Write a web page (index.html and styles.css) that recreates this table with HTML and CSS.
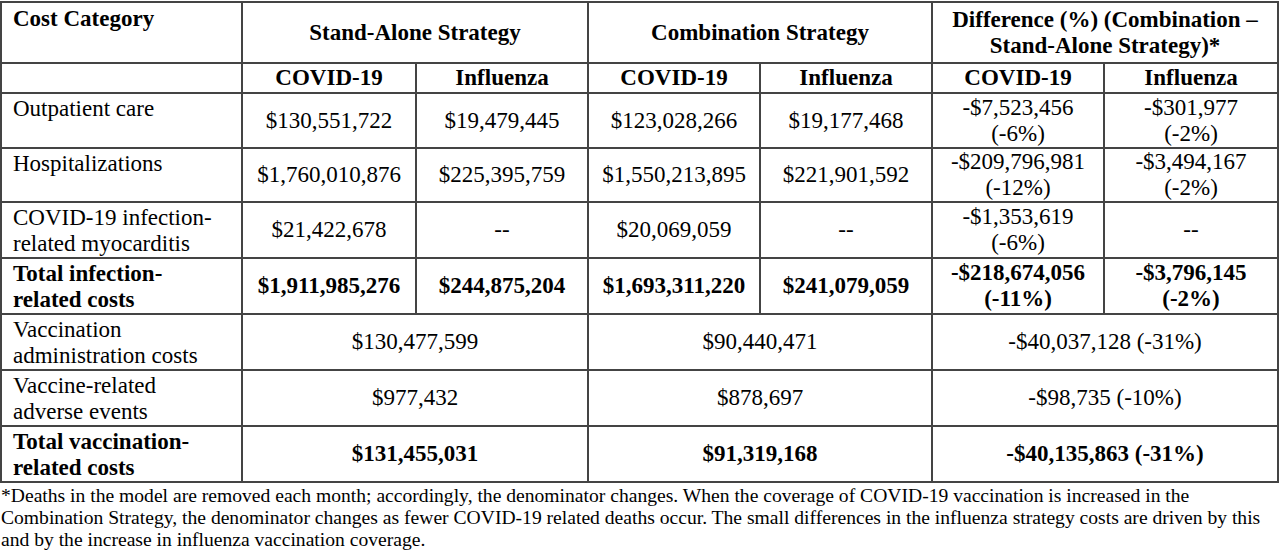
FILE: index.html
```html
<!DOCTYPE html>
<html lang="en">
<head>
    <meta charset="UTF-8">
    <meta name="viewport" content="width=device-width, initial-scale=1.0">
    <title>Cost comparison</title>
    <link rel="stylesheet" href="styles.css">
</head>
<body>
    <table class="costs">
        <colgroup>
            <col class="col-cat">
            <col class="col-a">
            <col class="col-b">
            <col class="col-b">
            <col class="col-b">
            <col class="col-b">
            <col class="col-a">
        </colgroup>
        <thead>
            <tr class="row-head">
                <th class="cat">Cost Category</th>
                <th colspan="2">Stand-Alone Strategy</th>
                <th colspan="2">Combination Strategy</th>
                <th colspan="2">Difference (%) (Combination –<br>Stand-Alone Strategy)*</th>
            </tr>
            <tr class="row-sub">
                <th class="cat"></th>
                <th>COVID-19</th>
                <th>Influenza</th>
                <th>COVID-19</th>
                <th>Influenza</th>
                <th>COVID-19</th>
                <th>Influenza</th>
            </tr>
        </thead>
        <tbody>
            <tr class="row-tall">
                <td class="cat">Outpatient care</td>
                <td>$130,551,722</td>
                <td>$19,479,445</td>
                <td>$123,028,266</td>
                <td>$19,177,468</td>
                <td>-$7,523,456<br>(-6%)</td>
                <td>-$301,977<br>(-2%)</td>
            </tr>
            <tr>
                <td class="cat">Hospitalizations</td>
                <td>$1,760,010,876</td>
                <td>$225,395,759</td>
                <td>$1,550,213,895</td>
                <td>$221,901,592</td>
                <td>-$209,796,981<br>(-12%)</td>
                <td>-$3,494,167<br>(-2%)</td>
            </tr>
            <tr class="row-tall">
                <td class="cat">COVID-19 infection-<br>related myocarditis</td>
                <td>$21,422,678</td>
                <td>--</td>
                <td>$20,069,059</td>
                <td>--</td>
                <td>-$1,353,619<br>(-6%)</td>
                <td>--</td>
            </tr>
            <tr class="total">
                <td class="cat">Total infection-<br>related costs</td>
                <td>$1,911,985,276</td>
                <td>$244,875,204</td>
                <td>$1,693,311,220</td>
                <td>$241,079,059</td>
                <td>-$218,674,056<br>(-11%)</td>
                <td>-$3,796,145<br>(-2%)</td>
            </tr>
            <tr class="row-tall">
                <td class="cat">Vaccination<br>administration costs</td>
                <td colspan="2">$130,477,599</td>
                <td colspan="2">$90,440,471</td>
                <td colspan="2">-$40,037,128 (-31%)</td>
            </tr>
            <tr>
                <td class="cat">Vaccine-related<br>adverse events</td>
                <td colspan="2">$977,432</td>
                <td colspan="2">$878,697</td>
                <td colspan="2">-$98,735 (-10%)</td>
            </tr>
            <tr class="total">
                <td class="cat">Total vaccination-<br>related costs</td>
                <td colspan="2">$131,455,031</td>
                <td colspan="2">$91,319,168</td>
                <td colspan="2">-$40,135,863 (-31%)</td>
            </tr>
        </tbody>
    </table>
    <p class="note">*Deaths in the model are removed each month; accordingly, the denominator changes. When the coverage of COVID-19 vaccination is increased in the<br>Combination Strategy, the denominator changes as fewer COVID-19 related deaths occur. The small differences in the influenza strategy costs are driven by this<br>and by the increase in influenza vaccination coverage.</p>
</body>
</html>
```

FILE: styles.css
```css
body {
    margin: 0;
    background: #fff;
    color: #000;
    font-family: "Liberation Serif", "Times New Roman", serif;
}
.costs {
    width: 1279px;
    table-layout: fixed;
    border-collapse: collapse;
    margin: 1px 0 0 0;
    font-size: 23px;
    line-height: 26px;
}
.col-cat {
    width: 241px;
}
.col-a {
    width: 174px;
}
.col-b {
    width: 172px;
}
.costs th,
.costs td {
    border: 2px solid #444;
    padding: 0;
    text-align: center;
    vertical-align: middle;
}
.costs th {
    font-weight: bold;
}
.costs .cat {
    text-align: left;
    vertical-align: top;
    padding: 2px 0 0 11px;
}
.row-head {
    height: 61px;
}
.row-head .cat {
    padding-top: 3px;
}
.row-sub {
    height: 30px;
}
.costs tbody tr {
    height: 54px;
}
.costs tbody tr.row-tall {
    height: 55px;
}
.costs tbody td.cat {
    font-weight: normal;
}
.total td,
.costs .total td.cat {
    font-weight: bold;
}
.note {
    margin: 2px 0 0 1px;
    font-size: 19.6px;
    line-height: 22px;
}
```
